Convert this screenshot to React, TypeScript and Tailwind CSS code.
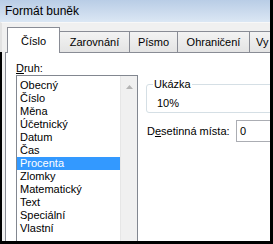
const items = [
  'Obecný',
  'Číslo',
  'Měna',
  'Účetnický',
  'Datum',
  'Čas',
  'Procenta',
  'Zlomky',
  'Matematický',
  'Text',
  'Speciální',
  'Vlastní',
]

const tabs = [
  { label: 'Zarovnání', w: 'w-[70px] justify-center' },
  { label: 'Písmo', w: 'w-[48px] justify-center' },
  { label: 'Ohraničení', w: 'w-[72px] justify-center' },
  { label: 'Vy', w: 'w-[60px] justify-start pl-[6px]' },
]

export default function App() {
  return (
    <div
      className="w-[273px] h-[244px] flex flex-col overflow-hidden border-r-[3px] border-b-[3px] border-black bg-[#f0f0f0] text-black text-[11px] leading-[13px]"
      style={{ fontFamily: '"Liberation Sans", Arial, sans-serif' }}
    >
      {/* title bar */}
      <div className="h-[22px] shrink-0 flex items-center pl-[5px] bg-gradient-to-b from-[#b9cde6] to-[#dbe7f4] text-[12px]">
        Formát buněk
      </div>

      {/* tab strip */}
      <div className="h-[30px] shrink-0 flex items-end pl-[5px] border-l-2 border-[#e2e2e2] border-t border-t-[#f8f8f8]">
        <div className="relative z-10 -mb-px w-[53px] h-[26px] shrink-0 flex items-center justify-center pt-[2px] bg-white border border-b-0 border-[#898c95]">
          Číslo
        </div>
        {tabs.map((t) => (
          <div
            key={t.label}
            className={`${t.w} h-[21px] shrink-0 flex items-center whitespace-nowrap pt-[1px] border-t border-r border-[#898c95] bg-gradient-to-b from-[#f3f3f3] to-[#e4e4e4]`}
          >
            {t.label}
          </div>
        ))}
      </div>

      {/* panel */}
      <div className="flex-1 pl-[3px] border-l-2 border-black">
        <div className="h-full w-[300px] bg-white border-t border-l border-[#898c95] flex pl-[10px] pt-[9px]">
          {/* left column */}
          <div className="w-[122px] shrink-0 flex flex-col">
            <div className="h-[13px]">
              <span className="underline">D</span>ruh:
            </div>
            <div className="flex-1 flex border border-[#828790] border-b-0">
              <div className="flex-1 pt-[3px]">
                {items.map((it) => (
                  <div
                    key={it}
                    className={`h-[13px] pl-[3px] ${it === 'Procenta' ? 'bg-[#3399ff] text-white' : ''}`}
                  >
                    {it}
                  </div>
                ))}
              </div>
              <div className="w-[17px] bg-[#f0f0f0] border-l border-[#e6e6e6] flex justify-center pt-[9px]">
                <svg width="7" height="4" viewBox="0 0 7 4">
                  <path d="M3.5 0 L7 4 L0 4 Z" fill="#b4b4b4" />
                </svg>
              </div>
            </div>
          </div>

          {/* right column */}
          <div className="ml-[8px] w-[150px] shrink-0 flex flex-col">
            <fieldset className="mt-[16px] border border-[#d5dfe5] rounded-[3px] pl-[6px] pb-[2px]">
              <legend className="px-px leading-[13px]">Ukázka</legend>
              <div className="ml-[4px] mt-[6px] h-[13px]">10%</div>
            </fieldset>
            <div className="mt-[7px] flex items-center">
              <div className="w-[89px] ml-px">
                D<span className="underline">e</span>setinná místa:
              </div>
              <div className="w-[60px] h-[22px] border border-[#abadb3] flex items-center pl-[3px]">
                0
              </div>
            </div>
          </div>
        </div>
      </div>
    </div>
  )
}
